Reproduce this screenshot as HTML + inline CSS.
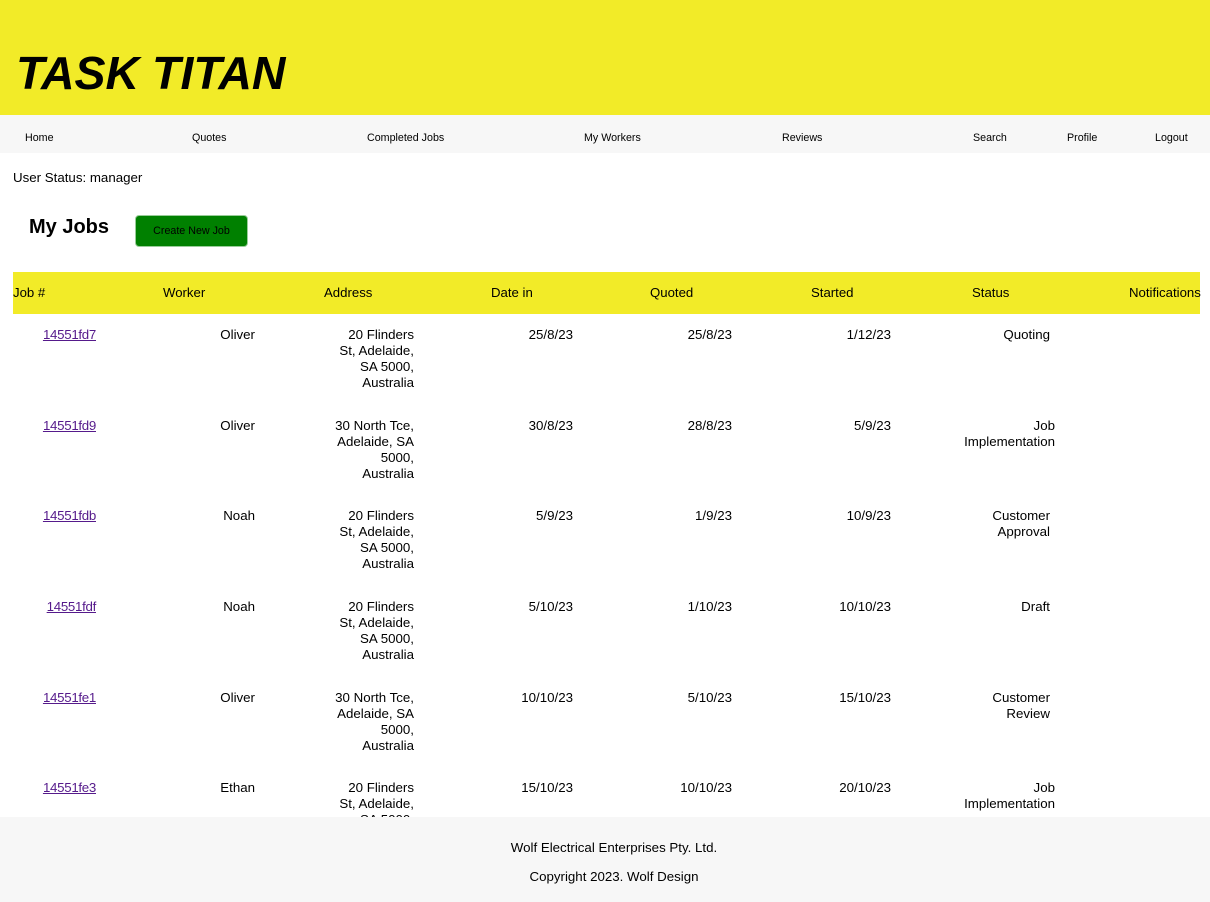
<!DOCTYPE html>
<html><head><meta charset="utf-8"><style>
*{margin:0;padding:0;box-sizing:border-box}
body{width:1210px;height:902px;overflow:hidden;position:relative;background:#fff;font-family:"Liberation Sans",Arial,sans-serif;color:#000}
.a{position:absolute;white-space:nowrap}
.hdr{position:absolute;left:0;top:0;width:1210px;height:115px;background:#f2eb28}
.title{position:absolute;left:16px;top:46px;font-size:46.5px;font-weight:bold;font-style:italic;line-height:54px}
.nav{position:absolute;left:0;top:115px;width:1210px;height:38px;background:#f7f7f7;font-size:10.7px}
.nav span{position:absolute;top:17px}
.th{position:absolute;left:13px;top:272px;width:1187px;height:42px;background:#f2eb28;font-size:13.2px}
.th span{position:absolute;top:13px}
.c{position:absolute;font-size:13.3px;line-height:16px;text-align:right;white-space:nowrap}
a{color:#551a8b;text-decoration:underline;letter-spacing:-0.3px}
.foot{position:absolute;left:0;top:817px;width:1210px;height:85px;background:#f7f7f7;font-size:13.3px;text-align:center}
.btn{position:absolute;left:135px;top:215px;width:113px;height:32px;background:#008000;border:1px solid #9c9;border-radius:4px;font-size:10.7px;text-align:center;line-height:30px}
</style></head><body>
<div class="hdr"><div class="title">TASK TITAN</div></div>
<div class="nav">
<span style="left:25px">Home</span><span style="left:192px">Quotes</span><span style="left:367px">Completed Jobs</span><span style="left:584px">My Workers</span><span style="left:782px">Reviews</span><span style="left:973px">Search</span><span style="left:1067px">Profile</span><span style="left:1155px">Logout</span>
</div>
<div class="a" style="left:13px;top:170px;font-size:13.3px">User Status: manager</div>
<div class="a" style="left:29px;top:216px;font-size:20px;font-weight:bold">My Jobs</div>
<div class="btn">Create New Job</div>
<div class="th">
<span style="left:0">Job #</span><span style="left:150px">Worker</span><span style="left:311px">Address</span><span style="left:478px">Date in</span><span style="left:637px">Quoted</span><span style="left:798px">Started</span><span style="left:959px">Status</span><span style="left:1116px">Notifications</span>
</div>
<div style="position:absolute;left:0;top:0;width:1210px;height:817px;overflow:hidden">
<div class="c" style="right:1114px;top:327px"><a>14551fd7</a></div>
<div class="c" style="right:955px;top:327px">Oliver</div>
<div class="c" style="right:796px;top:327px">20 Flinders<br>St, Adelaide,<br>SA 5000,<br>Australia</div>
<div class="c" style="right:637px;top:327px">25/8/23</div>
<div class="c" style="right:478px;top:327px">25/8/23</div>
<div class="c" style="right:319px;top:327px">1/12/23</div>
<div class="c" style="right:160px;top:327px">Quoting</div>

<div class="c" style="right:1114px;top:418px"><a>14551fd9</a></div>
<div class="c" style="right:955px;top:418px">Oliver</div>
<div class="c" style="right:796px;top:418px">30 North Tce,<br>Adelaide, SA<br>5000,<br>Australia</div>
<div class="c" style="right:637px;top:418px">30/8/23</div>
<div class="c" style="right:478px;top:418px">28/8/23</div>
<div class="c" style="right:319px;top:418px">5/9/23</div>
<div class="c" style="right:155px;top:418px">Job<br>Implementation</div>

<div class="c" style="right:1114px;top:508px"><a>14551fdb</a></div>
<div class="c" style="right:955px;top:508px">Noah</div>
<div class="c" style="right:796px;top:508px">20 Flinders<br>St, Adelaide,<br>SA 5000,<br>Australia</div>
<div class="c" style="right:637px;top:508px">5/9/23</div>
<div class="c" style="right:478px;top:508px">1/9/23</div>
<div class="c" style="right:319px;top:508px">10/9/23</div>
<div class="c" style="right:160px;top:508px">Customer<br>Approval</div>

<div class="c" style="right:1114px;top:599px"><a>14551fdf</a></div>
<div class="c" style="right:955px;top:599px">Noah</div>
<div class="c" style="right:796px;top:599px">20 Flinders<br>St, Adelaide,<br>SA 5000,<br>Australia</div>
<div class="c" style="right:637px;top:599px">5/10/23</div>
<div class="c" style="right:478px;top:599px">1/10/23</div>
<div class="c" style="right:319px;top:599px">10/10/23</div>
<div class="c" style="right:160px;top:599px">Draft</div>

<div class="c" style="right:1114px;top:690px"><a>14551fe1</a></div>
<div class="c" style="right:955px;top:690px">Oliver</div>
<div class="c" style="right:796px;top:690px">30 North Tce,<br>Adelaide, SA<br>5000,<br>Australia</div>
<div class="c" style="right:637px;top:690px">10/10/23</div>
<div class="c" style="right:478px;top:690px">5/10/23</div>
<div class="c" style="right:319px;top:690px">15/10/23</div>
<div class="c" style="right:160px;top:690px">Customer<br>Review</div>

<div class="c" style="right:1114px;top:780px"><a>14551fe3</a></div>
<div class="c" style="right:955px;top:780px">Ethan</div>
<div class="c" style="right:796px;top:780px">20 Flinders<br>St, Adelaide,<br>SA 5000,<br>Australia</div>
<div class="c" style="right:637px;top:780px">15/10/23</div>
<div class="c" style="right:478px;top:780px">10/10/23</div>
<div class="c" style="right:319px;top:780px">20/10/23</div>
<div class="c" style="right:155px;top:780px">Job<br>Implementation</div>
</div>
<div class="foot">
<div style="position:absolute;left:9px;width:100%;top:23px">Wolf Electrical Enterprises Pty. Ltd.</div>
<div style="position:absolute;left:9px;width:100%;top:52px">Copyright 2023. Wolf Design</div>
</div>
</body></html>
